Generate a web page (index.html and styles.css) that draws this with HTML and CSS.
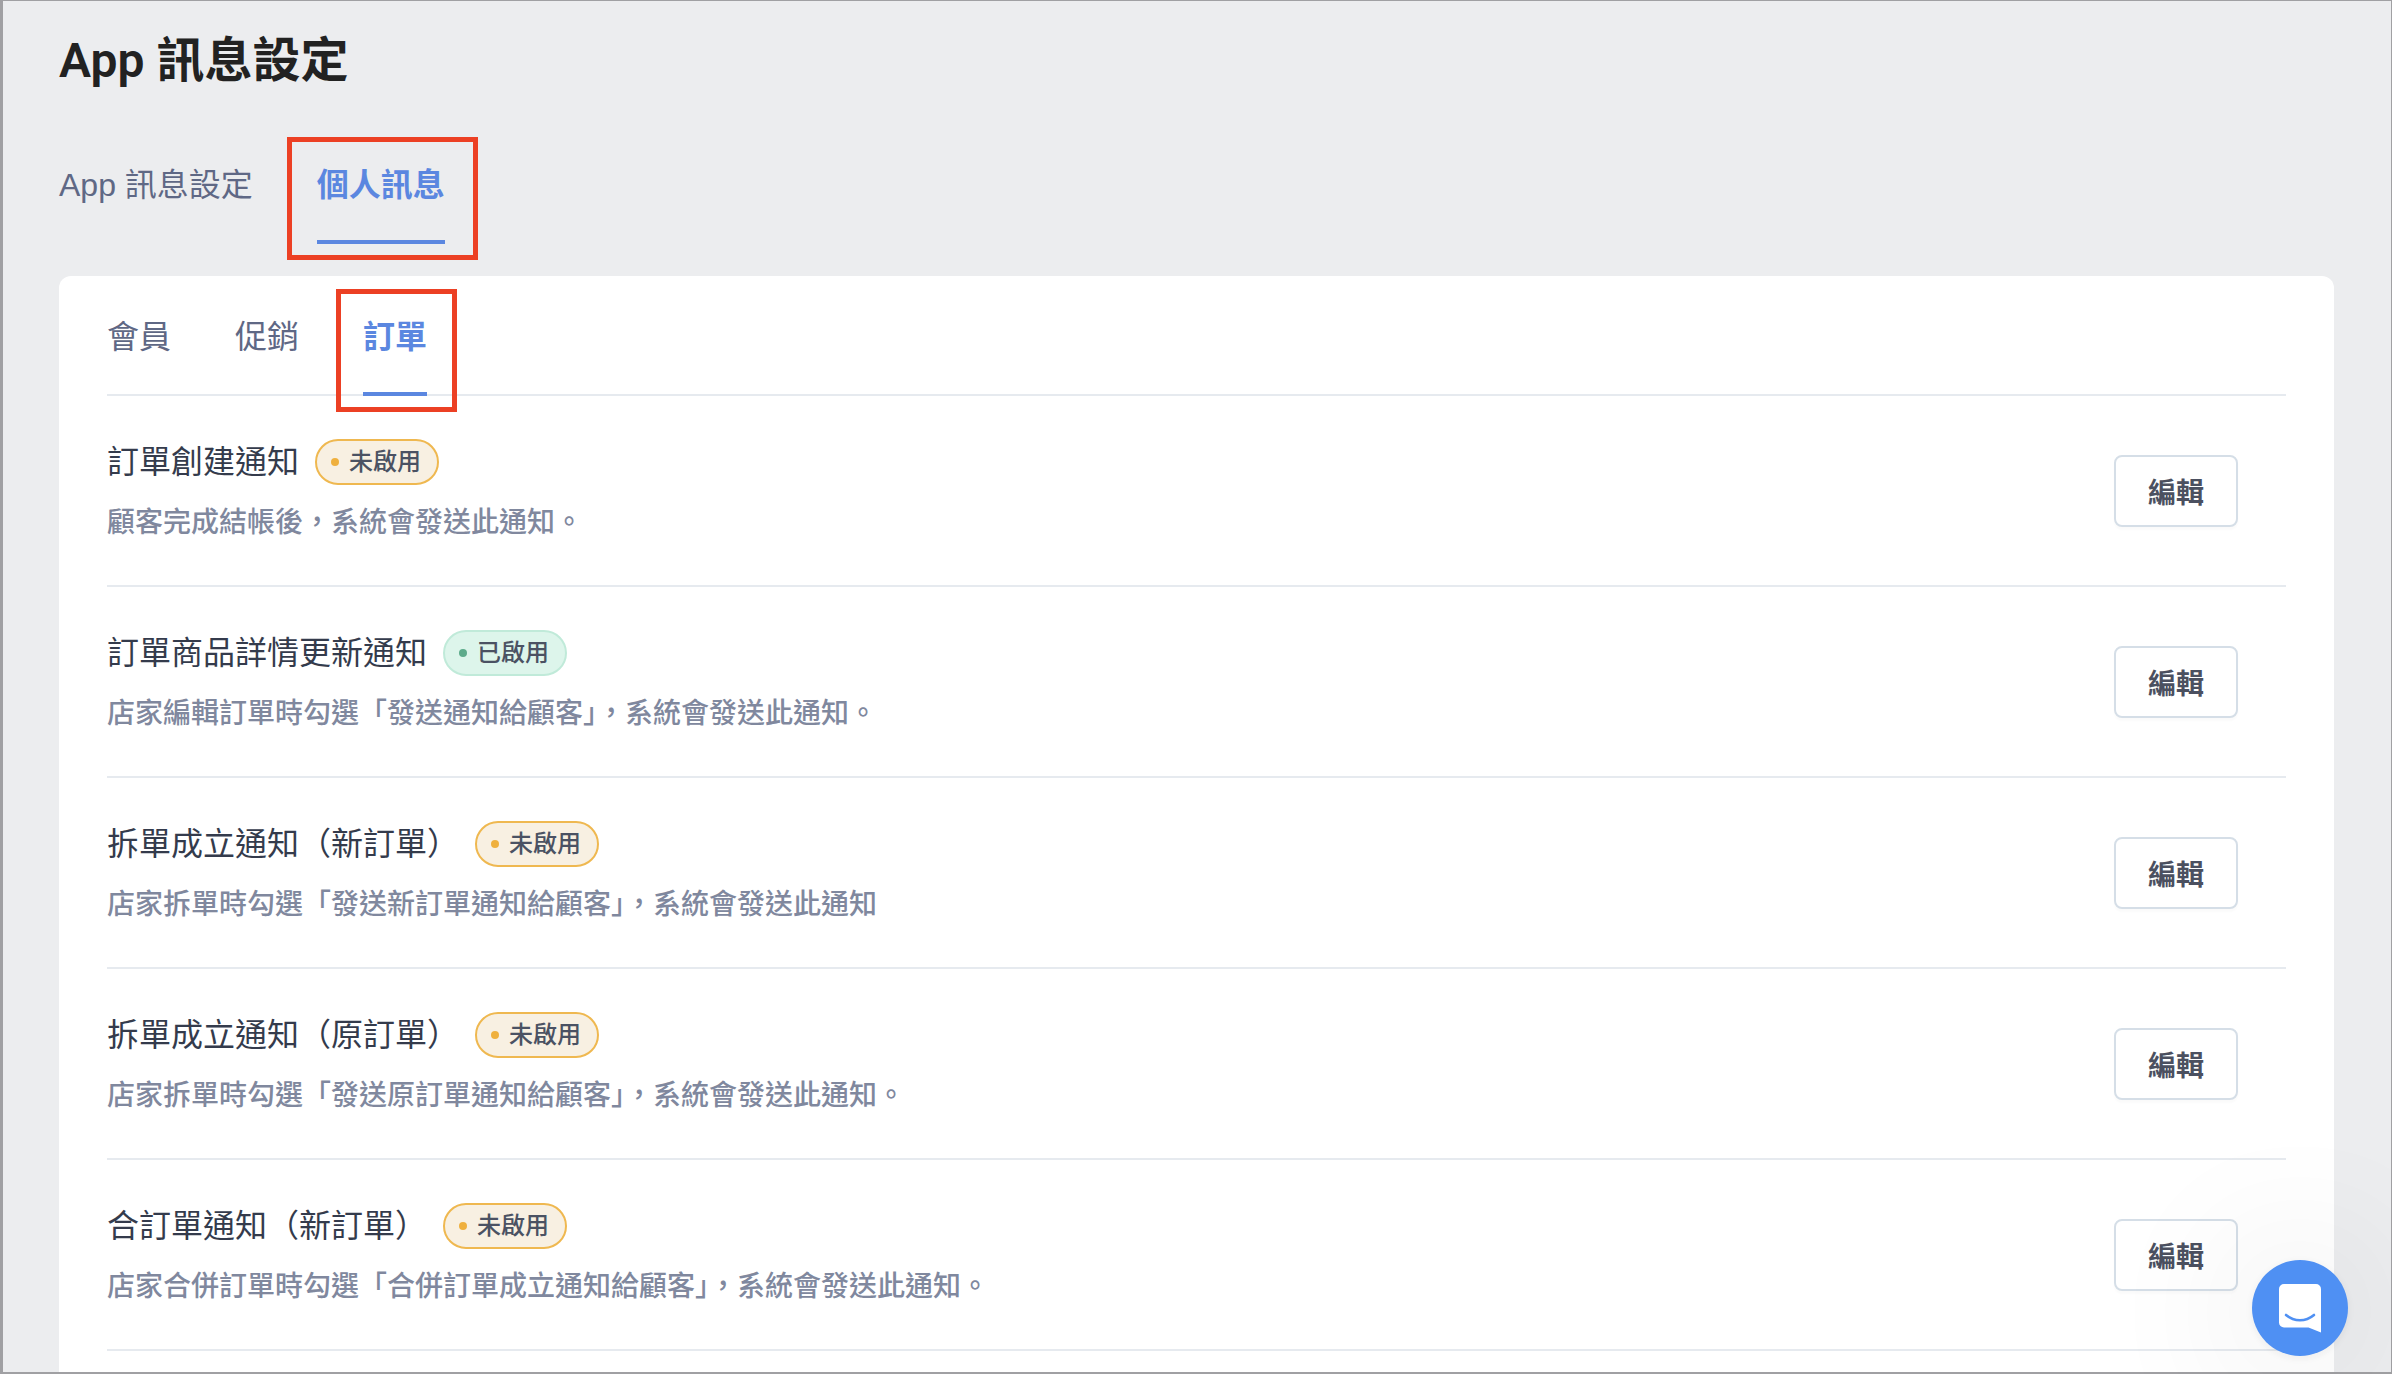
FILE: index.html
```html
<!DOCTYPE html>
<html lang="zh-Hant">
<head>
    <meta charset="UTF-8">
    <meta name="viewport" content="width=device-width, initial-scale=1.0">
    <title>App 訊息設定</title>
    <link rel="stylesheet" href="styles.css">
</head>
<body>
    <div class="page">
        <h1 class="page-title">App 訊息設定</h1>

        <nav class="tabs" aria-label="App 訊息設定">
            <a href="#settings" class="tab">App 訊息設定</a>
            <a href="#personal" class="tab tab--active" aria-current="page">個人訊息</a>
        </nav>

        <main class="card">
            <nav class="tabs tabs--card" aria-label="個人訊息">
                <a href="#member" class="tab">會員</a>
                <a href="#promotion" class="tab">促銷</a>
                <a href="#order" class="tab tab--active tab--short" aria-current="page">訂單</a>
            </nav>

            <ul class="notice-list">
                <li class="notice">
                    <div class="notice-body">
                        <div class="notice-heading">
                            <h2 class="notice-title">訂單創建通知</h2>
                            <span class="badge badge--off">未啟用</span>
                        </div>
                        <p class="notice-text">顧客完成結帳後，系統會發送此通知。</p>
                    </div>
                    <button type="button" class="button">編輯</button>
                </li>
                <li class="notice">
                    <div class="notice-body">
                        <div class="notice-heading">
                            <h2 class="notice-title">訂單商品詳情更新通知</h2>
                            <span class="badge badge--on">已啟用</span>
                        </div>
                        <p class="notice-text">店家編輯訂單時勾選「發送通知給顧客」，系統會發送此通知。</p>
                    </div>
                    <button type="button" class="button">編輯</button>
                </li>
                <li class="notice">
                    <div class="notice-body">
                        <div class="notice-heading">
                            <h2 class="notice-title">拆單成立通知（新訂單）</h2>
                            <span class="badge badge--off">未啟用</span>
                        </div>
                        <p class="notice-text">店家拆單時勾選「發送新訂單通知給顧客」，系統會發送此通知</p>
                    </div>
                    <button type="button" class="button">編輯</button>
                </li>
                <li class="notice">
                    <div class="notice-body">
                        <div class="notice-heading">
                            <h2 class="notice-title">拆單成立通知（原訂單）</h2>
                            <span class="badge badge--off">未啟用</span>
                        </div>
                        <p class="notice-text">店家拆單時勾選「發送原訂單通知給顧客」，系統會發送此通知。</p>
                    </div>
                    <button type="button" class="button">編輯</button>
                </li>
                <li class="notice">
                    <div class="notice-body">
                        <div class="notice-heading">
                            <h2 class="notice-title">合訂單通知（新訂單）</h2>
                            <span class="badge badge--off">未啟用</span>
                        </div>
                        <p class="notice-text">店家合併訂單時勾選「合併訂單成立通知給顧客」，系統會發送此通知。</p>
                    </div>
                    <button type="button" class="button">編輯</button>
                </li>
            </ul>
        </main>
    </div>

    <button type="button" class="chat-button" aria-label="Chat">
        <svg class="chat-icon" viewBox="0 0 42 49" aria-hidden="true">
            <path fill="#fff" d="M5 0h32a5 5 0 0 1 5 5v43.500L29.500 43.500H5a5 5 0 0 1-5-5V5a5 5 0 0 1 5-5z"/>
            <path fill="none" stroke="#4f90f3" stroke-width="2.600" stroke-linecap="round" d="M7 31c8.500 7 19.500 7 28 0"/>
        </svg>
    </button>
</body>
</html>
```
FILE: styles.css
```css
:root {
    --clr-page: #ecedef;
    --clr-frame: #a0a0a3;
    --clr-surface: #ffffff;
    --clr-heading: #222222;
    --clr-tab: #5f6885;
    --clr-active: #5b87e0;
    --clr-text: #343b4c;
    --clr-text-muted: #80889e;
    --clr-border: #e6eaef;
    --clr-highlight: #ec4024;
    --font-family: "Liberation Sans", "Noto Sans CJK TC", sans-serif;
    --font-heading: Roboto, "Noto Sans CJK TC", sans-serif;
}

* {
    margin: 0;
    padding: 0;
    box-sizing: border-box;
}

body {
    font-family: var(--font-family);
    font-weight: 500;
    color: var(--clr-text);
    background: var(--clr-page);
}

.page {
    display: flex;
    flex-direction: column;
    min-height: 100vh;
    padding: 28px 57px 0 56px;
    border: solid var(--clr-frame);
    border-width: 1px 1px 2px 3px;
}

.page-title {
    margin-bottom: 68px;
    font-family: var(--font-heading);
    font-size: 48px;
    font-weight: 600;
    line-height: 64px;
    color: var(--clr-heading);
}

/* Tabs */
.tabs {
    display: flex;
    gap: 64px;
    margin-bottom: 32px;
}

.tab {
    position: relative;
    padding-bottom: 31px;
    border-bottom: 4px solid transparent;
    font-size: 32px;
    font-weight: 400;
    line-height: 48px;
    color: var(--clr-tab);
    text-decoration: none;
}

.tab--active {
    border-color: var(--clr-active);
    font-weight: 700;
    color: var(--clr-active);
}

/* Highlight frame around the selected tab */
.tab--active::after {
    content: "";
    position: absolute;
    inset: -24px -33px -20px -30px;
    border: 5px solid var(--clr-highlight);
}

.tab--short::after {
    left: -27px;
    right: -30px;
}

.tabs--card {
    margin-bottom: 0;
    border-bottom: 2px solid var(--clr-border);
}

.tabs--card .tab {
    margin-bottom: -2px;
}

.card {
    flex: 1;
    padding: 37px 48px 0;
    border-radius: 12px 12px 0 0;
    background: var(--clr-surface);
}

/* Notification rows */
.notice-list {
    list-style: none;
}

.notice {
    display: flex;
    align-items: center;
    justify-content: space-between;
    gap: 48px;
    padding: 42px 48px 41px 0;
    border-bottom: 2px solid var(--clr-border);
}

.notice-heading {
    display: flex;
    align-items: center;
    gap: 16px;
    margin-bottom: 16px;
}

.notice-title {
    font-size: 32px;
    font-weight: 400;
    line-height: 48px;
}

.notice-text {
    font-size: 28px;
    line-height: 42px;
    color: var(--clr-text-muted);
}

.badge {
    display: inline-flex;
    align-items: center;
    gap: 10px;
    height: 46px;
    padding: 0 16px 0 14px;
    border: 2px solid;
    border-radius: 23px;
    font-size: 24px;
    line-height: 42px;
}

.badge::before {
    content: "";
    width: 8px;
    height: 8px;
    border-radius: 50%;
}

.badge--off {
    border-color: #efb850;
    background: #f8f0e2;
    color: #4b5263;
}

.badge--off::before {
    background: #efb03e;
}

.badge--on {
    border-color: #c0ead9;
    background: #ddf5eb;
    color: #4b5263;
}

.badge--on::before {
    background: #5dab8b;
}

.button {
    flex: none;
    height: 72px;
    padding: 0 32px;
    border: 2px solid #d5dee7;
    border-radius: 8px;
    background: var(--clr-surface);
    box-shadow: 0 3px 2px rgba(0, 0, 0, 0.02);
    font-family: inherit;
    font-size: 28px;
    font-weight: 600;
    color: #4b5060;
    cursor: pointer;
}

.chat-button {
    position: fixed;
    right: 44px;
    bottom: 18px;
    display: flex;
    align-items: center;
    justify-content: center;
    width: 96px;
    height: 96px;
    border: none;
    border-radius: 50%;
    background: #4f90f3;
    box-shadow: 0 2px 12px rgba(0, 0, 0, 0.06), 0 4px 160px rgba(0, 0, 0, 0.16);
    cursor: pointer;
}

.chat-icon {
    width: 42px;
    height: 49px;
}
```
